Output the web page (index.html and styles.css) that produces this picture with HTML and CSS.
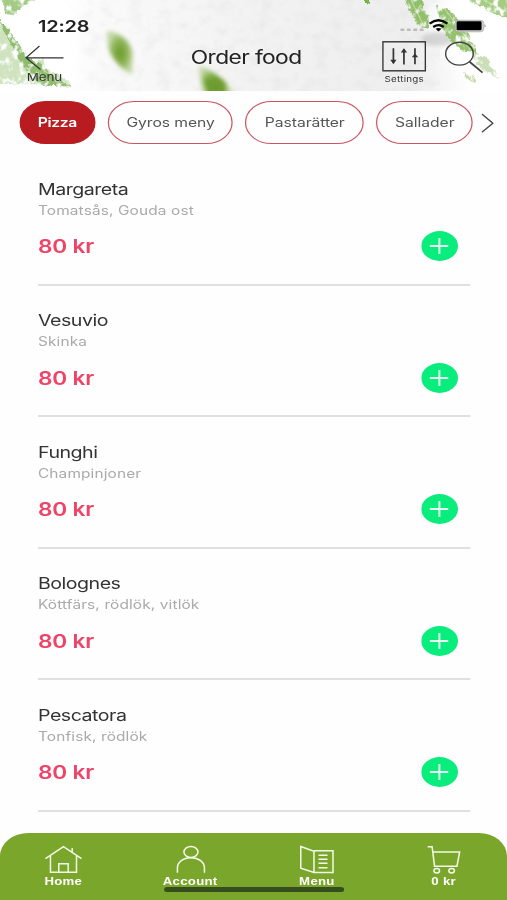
FILE: index.html
```html
<!DOCTYPE html>
<html lang="sv">
<head>
<meta charset="utf-8">
<title>Order food</title>
<link rel="stylesheet" href="styles.css">
</head>
<body>
<main class="screen">
  <header class="header">
    <svg class="header-art" viewBox="0 0 507 91" preserveAspectRatio="none" aria-hidden="true">
      <defs>
        <filter id="paper" x="0" y="0" width="100%" height="100%">
          <feTurbulence type="fractalNoise" baseFrequency=".07 .09" numOctaves="4" seed="4"/>
          <feColorMatrix values="0 0 0 0 .6  0 0 0 0 .6  0 0 0 0 .6  .8 0 0 0 -.36"/>
        </filter>
        <filter id="rough" filterUnits="userSpaceOnUse" x="-20" y="-20" width="550" height="130" color-interpolation-filters="sRGB">
          <feTurbulence type="fractalNoise" baseFrequency=".16 .14" numOctaves="3" seed="8" result="n"/>
          <feColorMatrix in="n" values="0 0 0 0 1  0 0 0 0 1  0 0 0 0 1  0 4 0 0 -1.05" result="mask"/>
          <feDisplacementMap in="SourceGraphic" in2="n" scale="7" xChannelSelector="R" yChannelSelector="G" result="d"/>
          <feComposite in="d" in2="mask" operator="in"/>
          <feGaussianBlur stdDeviation=".7"/>
        </filter>
        <filter id="soft" x="-30%" y="-30%" width="160%" height="160%"><feGaussianBlur stdDeviation="2.2"/></filter>
        <filter id="wide" x="-40%" y="-40%" width="180%" height="180%"><feGaussianBlur stdDeviation="9"/></filter>
        <linearGradient id="fade" x1="0" x2="1">
          <stop offset="0" stop-color="#fff"/><stop offset=".2" stop-color="#fafafa"/>
          <stop offset=".5" stop-color="#f2f2f2"/><stop offset=".82" stop-color="#eee"/>
          <stop offset=".93" stop-color="#fff"/>
        </linearGradient>
        <radialGradient id="leaf"><stop offset="0" stop-color="#6b9a25"/><stop offset=".55" stop-color="#8bb355"/><stop offset="1" stop-color="#c4d9a5"/></radialGradient>
      </defs>
      <rect width="507" height="91" fill="url(#fade)"/>
      <rect x="70" width="370" height="91" filter="url(#paper)" opacity=".6"/>
      <path d="M455 -10H520V100H500L450 55L425 20Z" fill="#fff" filter="url(#wide)"/>
      <path d="M-10 -10H75L85 100H-10Z" fill="#fff" filter="url(#wide)"/>
      <ellipse cx="438" cy="39" rx="17" ry="7" fill="#bdbdbd" opacity=".6" filter="url(#soft)"/>
      <g filter="url(#rough)">
        <path d="M-6 22L2 26L22 52L32 62L44 58L46 68L56 74L70 82L68 87L30 84L-6 84Z" fill="#cfe3bf"/>
        <path d="M-2 18L12 34L28 57L42 66L54 78L70 86H44L30 76L14 52Z" fill="#8fbc6f"/>
        <path d="M3 -5H44L24 5L14 15L5 14Z" fill="#a3cb85"/>
        <path d="M404 -4L418 -3L427 12L428 30L418 24L408 8Z" fill="#92c06a"/>
        <path d="M436 5L453 14L468 32L478 54L462 51L444 34Z" fill="#94c26f"/>
        <path d="M470 52L486 58L500 78L492 76L478 66Z" fill="#cadeb8"/>
        <path d="M462 -4H508V20L494 14L478 5Z" fill="#a4cc82"/>
        <path d="M364 0h5v6l-5-2z" fill="#70b343"/>
        <path d="M462 72l10 3l6 8l-8-2z" fill="#c0d8a2"/>
      </g>
      <g fill="none" stroke="#fff" opacity=".45">
        <path d="M444 8L474 48M452 10L482 52M480 -2L507 12M410 -2L424 26"/>
      </g>
      <path d="M107 31C119 31 132 42 133 54L132 75C121 69 110 57 108 47Z" fill="url(#leaf)" filter="url(#soft)"/>
      <path d="M199 66C210 69 227 80 234 94H202Z" fill="url(#leaf)" filter="url(#soft)"/>
      <path d="M205 78l18 4l4 12h-20z" fill="#6c9c2d" filter="url(#soft)"/>
    </svg>

    <div class="status">
      <span class="time">12:28</span>
      <svg class="status-icons" viewBox="398 14 92 20" preserveAspectRatio="none">
        <path d="M400.5 29.7h24" stroke="#bbb" stroke-width="2.6" stroke-dasharray="3.8 2.6"/>
        <g fill="none" stroke="#050505" stroke-width="2.3">
          <path d="M429.6 23.6Q438.6 16.9 447.4 23.6"/>
          <path d="M433.2 27Q438.6 23.2 443.8 27"/>
        </g>
        <path d="M435.5 28.8Q438.5 27 441.5 28.8L438.5 31.6Z" fill="#050505"/>
        <rect x="455.3" y="20.2" width="28.4" height="11.6" rx="3.2" fill="#d4d4d4" stroke="#aaa" stroke-width=".8"/>
        <rect x="456.6" y="21.3" width="25" height="9" rx="1.4" fill="#000"/>
        <path d="M484.6 24Q487 25.9 484.6 27.8Z" fill="#999"/>
      </svg>
    </div>

    <nav class="nav">
      <a class="back">
        <svg class="back-icon" viewBox="25 45 40 26" preserveAspectRatio="none"><path d="M64 57.8H26.5M40 46L26.5 57.8L41 69.5" fill="none" stroke="#333" stroke-width="1.2"/></svg>
        <span class="back-label">Menu</span>
      </a>
      <h1 class="title">Order food</h1>
      <div class="actions">
        <a class="settings">
          <svg class="settings-icon" viewBox="382 41 44 31" preserveAspectRatio="none">
            <rect x="382.8" y="41.8" width="42.4" height="29" fill="none" stroke="#333" stroke-width="1.4"/>
            <path d="M393.3 48.2V63M403.8 49V64.5M414.8 48.2V64.3" stroke="#333" stroke-width="1.7"/>
            <path d="M390.2 59.8H396.4L393.3 64.2ZM400.7 52.6H406.9L403.8 48.2ZM411.6 57.2L414.8 53.6L418 57.2Z" fill="#333"/>
          </svg>
          <span class="settings-label">Settings</span>
        </a>
        <svg class="search-icon" viewBox="444 41 40 33" preserveAspectRatio="none"><g fill="none" stroke="#444" stroke-width="1.4"><ellipse cx="458.9" cy="53.7" rx="13.8" ry="11.4"/><path d="M469 61.7L482 72.6" stroke-width="1.8"/></g></svg>
      </div>
    </nav>
  </header>

  <div class="chips">
    <span class="chip chip-active c1">Pizza</span>
    <span class="chip c2">Gyros meny</span>
    <span class="chip c3">Pastarätter</span>
    <span class="chip c4">Sallader</span>
    <svg class="chevron" viewBox="481 112 13 20" preserveAspectRatio="none"><path d="M481.6 113L492.6 122.2L481.6 131.2" fill="none" stroke="#444" stroke-width="1.4"/></svg>
  </div>

  <section class="list">
    <article class="dish"><h2 class="name">Margareta</h2><p class="desc">Tomatsås, Gouda ost</p><div class="buy"><span class="price">80 kr</span><span class="add"></span></div></article>
    <article class="dish"><h2 class="name">Vesuvio</h2><p class="desc">Skinka</p><div class="buy"><span class="price">80 kr</span><span class="add"></span></div></article>
    <article class="dish"><h2 class="name">Funghi</h2><p class="desc">Champinjoner</p><div class="buy"><span class="price">80 kr</span><span class="add"></span></div></article>
    <article class="dish"><h2 class="name">Bolognes</h2><p class="desc">Köttfärs, rödlök, vitlök</p><div class="buy"><span class="price">80 kr</span><span class="add"></span></div></article>
    <article class="dish"><h2 class="name">Pescatora</h2><p class="desc">Tonfisk, rödlök</p><div class="buy"><span class="price">80 kr</span><span class="add"></span></div></article>
  </section>

  <footer class="tabs">
    <a class="tab">
      <svg class="tab-icon" viewBox="43.4 845 40 29" preserveAspectRatio="none"><path d="M46 858.6L64 846.6L82 858.6M51 856V872.3H77V856M59.3 872V863.7H68.7V872M72.7 852V848" /></svg>
      <span>Home</span>
    </a>
    <a class="tab">
      <svg class="tab-icon" viewBox="170.1 845 40 29" preserveAspectRatio="none"><ellipse cx="190.8" cy="852" rx="7" ry="5.6"/><path d="M177.3 872.8V868C177.3 862 183 857.7 190.8 857.7S204.3 862 204.3 868V872.8"/></svg>
      <span>Account</span>
    </a>
    <a class="tab">
      <svg class="tab-icon" viewBox="296.9 845 40 29" preserveAspectRatio="none"><path d="M301.3 846.5L314.5 851.3V872.5L301.3 868.3ZM314.5 850.8H333.5V872.5H314.5M319 855.2H328M319 859.3H328M319 863.3H328M319 867.7H328"/></svg>
      <span>Menu</span>
    </a>
    <a class="tab">
      <svg class="tab-icon" viewBox="423.6 845 40 29" preserveAspectRatio="none"><path d="M427.5 846.8H432L434.4 866.2H456.8L459.5 852H432.8"/><ellipse cx="436.6" cy="870.7" rx="2.8" ry="2.2"/><ellipse cx="451.5" cy="870.7" rx="2.8" ry="2.2"/></svg>
      <span>0 kr</span>
    </a>
    <i class="home-indicator"></i>
  </footer>
</main>
</body>
</html>
```

FILE: styles.css
```css
* { box-sizing: border-box; }
html, body { margin: 0; padding: 0; }
body { width: 507px; height: 900px; overflow: hidden; background: #fefefe; font-family: Inter, "Liberation Sans", sans-serif; }
h1, h2, p { margin: 0; font-weight: 400; }
svg { display: block; flex: none; }

/* 414px wide phone layout, widened to fill the window */
.screen {
  width: 414px; height: 900px; display: flex; flex-direction: column;
  transform: scaleX(1.22464); transform-origin: 0 0; color: #333;
}

.header { position: relative; height: 91px; overflow: hidden; }
.header-art { position: absolute; inset: 0; width: 100%; height: 91px; }
.status, .nav { position: relative; }
.status { height: 41px; padding: 14px 14px 0 31px; display: flex; justify-content: space-between; }
.time { font-size: 16.3px; line-height: 24px; font-weight: 600; letter-spacing: -.15px; color: #222; }
.status-icons { width: 75.1px; height: 20px; }
.nav { display: grid; grid-template-columns: 135.4px 156.3px 1fr; padding-left: 20.4px; height: 50px; }
.back { padding-top: 4px; }
.back-icon { width: 32.7px; height: 26px; }
.back-label { display: block; padding-left: 1.5px; font: 11px/12px Inter, sans-serif; letter-spacing: -.15px; }
.title { font-size: 18.6px; line-height: 33px; letter-spacing: -.5px; color: #222; white-space: nowrap; }
.actions { display: flex; gap: 14.5px; }
.settings { width: 36px; text-align: center; }
.settings-icon { width: 36px; height: 31px; }
.settings-label { display: block; font-size: 8px; line-height: 14px; letter-spacing: .2px; white-space: nowrap; }
.search-icon { width: 32.7px; height: 33px; }

.chips { display: flex; align-items: center; gap: 9.8px; height: 43px; margin: 10px 0 0 15.5px; }
.chip { height: 43px; border: 1px solid #cb5560; border-radius: 22px; text-align: center; font-size: 12.8px; line-height: 42px; letter-spacing: -.05px; color: #555; white-space: nowrap; flex: none; }
.chip-active { background: #b81b20; border-color: #b81b20; color: #fff; font-weight: 600; letter-spacing: -.3px; }
.c1 { width: 62.8px; }
.c2 { width: 102.4px; }
.c3 { width: 97.2px; }
.c4 { width: 79.2px; }
.chevron { width: 10.6px; height: 20px; margin-left: -3.4px; }

.list { flex: 1; padding: 10px 30px 0 31px; }
.dish { height: 131.5px; padding-top: 23.5px; border-bottom: 2px solid #e0e0e0; }
.name { font-size: 16px; line-height: 22px; letter-spacing: -.4px; }
.desc { font-size: 12.6px; line-height: 21px; color: #aaa; letter-spacing: .1px; }
.buy { display: flex; justify-content: space-between; align-items: center; height: 32px; margin-top: 9.5px; padding-right: 10.2px; }
.price { font-size: 18.5px; font-weight: 600; letter-spacing: -.15px; color: #ef4468; }
.add {
  width: 30px; height: 30px; border-radius: 50%;
  background:
    linear-gradient(#e8fff2, #e8fff2) center / 15px 2px no-repeat,
    linear-gradient(#e8fff2, #e8fff2) center / 1.6px 16px no-repeat,
    #08ed7b;
}

.tabs { position: relative; height: 67px; display: grid; grid-template-columns: repeat(4, 1fr); border-radius: 23px 23px 0 0; background: #7ba62c; }
.tab { position: relative; z-index: 1; display: flex; flex-direction: column; align-items: center; padding-top: 12px; color: #fff; font: bold 10.8px/14px "Liberation Sans", Arial, sans-serif; letter-spacing: .2px; }
.tab-icon { width: 32.7px; height: 29px; fill: none; stroke: #f4fae9; stroke-width: 1.5; }
.home-indicator { position: absolute; left: 134px; top: 54px; width: 147px; height: 5px; border-radius: 3px; background: #364d1d; filter: blur(.4px); }
```
